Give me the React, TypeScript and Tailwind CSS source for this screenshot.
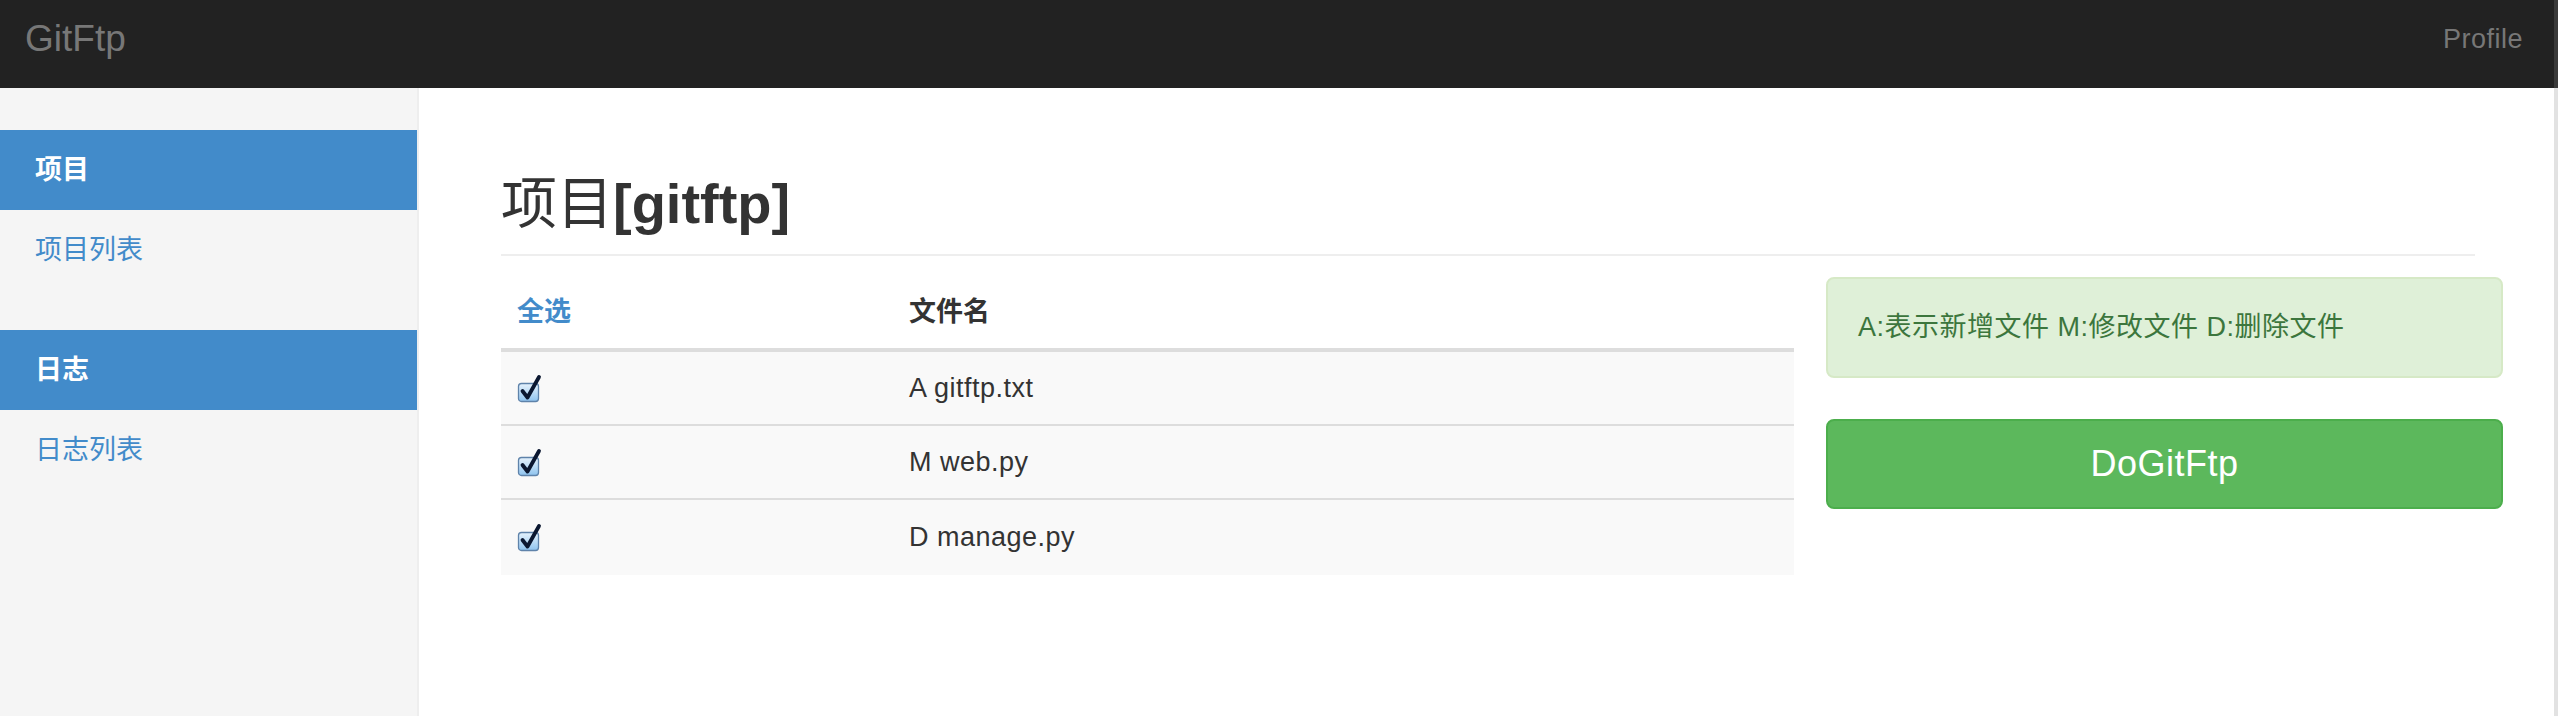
const font = "font-['Liberation_Sans','Noto_Sans_CJK_SC',sans-serif]";

const files = ["A gitftp.txt", "M web.py", "D manage.py"];

function CheckBox() {
  return (
    <svg width="27" height="29" viewBox="0 0 27 29" className="shrink-0">
      <defs>
        <linearGradient id="cbfill" x1="0" y1="0" x2="0" y2="1">
          <stop offset="0" stopColor="#e6f2fc" />
          <stop offset="0.5" stopColor="#bcdcf6" />
          <stop offset="1" stopColor="#8ec3ee" />
        </linearGradient>
      </defs>
      <rect x="1.5" y="9.5" width="20" height="18" rx="3" fill="url(#cbfill)" stroke="#5f83aa" strokeWidth="1.3" />
      <path d="M5.5 17 L10.5 23.5 L22 3" fill="none" stroke="#0b1730" strokeWidth="3.8" strokeLinecap="round" strokeLinejoin="round" />
    </svg>
  );
}

export default function App() {
  return (
    <div className={`flex h-[716px] w-[2558px] overflow-hidden bg-white text-[#333] ${font}`}>
      <div className="flex min-w-0 flex-1 flex-col">
        <header className="flex h-[88px] items-center justify-between bg-[#222] pb-[10px] pl-[25px] pr-[31px]">
          <span className="text-[37px] text-[#777]">GitFtp</span>
          <span className="text-[27px] tracking-[0.5px] text-[#777]">Profile</span>
        </header>

        <div className="flex flex-1">
          <nav className="w-[419px] shrink-0 border-r-2 border-[#eee] bg-[#f5f5f5] pt-[42px] text-[27px]">
            <div className="flex h-[80px] items-center bg-[#428bca] pl-[35px] font-semibold text-white">项目</div>
            <a href="#" className="flex h-[80px] items-center pl-[35px] text-[#428bca]">项目列表</a>
            <div className="mt-[40px] flex h-[80px] items-center bg-[#428bca] pl-[35px] font-semibold text-white">日志</div>
            <a href="#" className="flex h-[80px] items-center pl-[35px] text-[#428bca]">日志列表</a>
          </nav>

          <main className="flex-1 pl-[82px] pr-[51px] pt-[87px]">
            <h1 className="mr-[28px] border-b-2 border-[#eee] pb-[21px] text-[56px] leading-[58px]">
              <span className="font-normal">项目</span>
              <span className="font-bold">[gitftp]</span>
            </h1>

            <div className="mt-[21px] grid grid-cols-[1293px_677px] gap-[32px] text-[27px]">
              <div>
                <div className="grid h-[75px] grid-cols-[408px_1fr] items-center border-b-4 border-[#ddd] font-bold">
                  <a href="#" className="pl-[16px] text-[#428bca]">全选</a>
                  <span>文件名</span>
                </div>
                {files.map((f, i) => (
                  <div
                    key={f}
                    className={`grid grid-cols-[408px_1fr] items-center bg-[#f9f9f9] ${i < files.length - 1 ? "h-[74px] border-b-2 border-[#ddd]" : "h-[75px]"}`}
                  >
                    <div className="flex pl-[16px]">
                      <CheckBox />
                    </div>
                    <span className="tracking-[0.5px]">{f}</span>
                  </div>
                ))}
              </div>

              <div className="flex flex-col gap-[41px]">
                <div className="flex h-[101px] items-center rounded-[8px] border-2 border-[#d6e9c6] bg-[#dff0d8] pl-[30px] tracking-[0.5px] text-[#3c763d]">
                  A:表示新增文件 M:修改文件 D:删除文件
                </div>
                <button className="flex h-[90px] items-center justify-center rounded-[8px] border-2 border-[#4cae4c] bg-[#5cb85c] text-[36px] tracking-[0.5px] text-white">
                  DoGitFtp
                </button>
              </div>
            </div>
          </main>
        </div>
      </div>
      <div className="flex w-[4px] shrink-0 flex-col">
        <div className="h-[88px] bg-[#3a3a3a]" />
        <div className="flex-1 bg-[#e2e2e2]" />
      </div>
    </div>
  );
}
